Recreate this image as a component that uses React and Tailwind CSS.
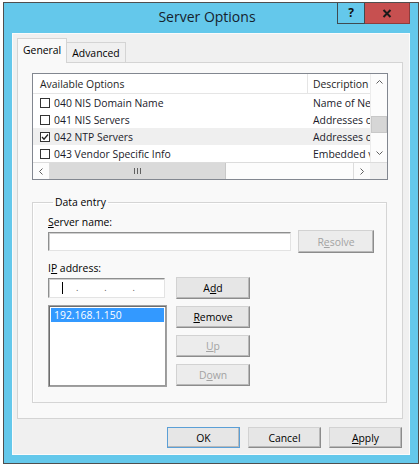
import React from 'react';

// Windows 8 style "Server Options" DHCP dialog

const options = [
  { code: '040 NIS Domain Name', desc: 'Name of Network', checked: false },
  { code: '041 NIS Servers', desc: 'Addresses of', checked: false },
  { code: '042 NTP Servers', desc: 'Addresses of', checked: true, hover: true },
  { code: '043 Vendor Specific Info', desc: 'Embedded ven', checked: false },
];

function Chevron({ dir }) {
  const paths = {
    up: 'M1.5 5.5 L4.5 2.5 L7.5 5.5',
    down: 'M1.5 2.5 L4.5 5.5 L7.5 2.5',
    left: 'M5.5 1.5 L2.5 4.5 L5.5 7.5',
    right: 'M2.5 1.5 L5.5 4.5 L2.5 7.5',
  };
  return (
    <svg width="9" height="9" viewBox="0 0 9 9">
      <path d={paths[dir]} fill="none" stroke="#606060" strokeWidth="1" />
    </svg>
  );
}

function Btn({ children, w = 'w-[74px]', h = 'h-[22px]', disabled = false, isDefault = false }) {
  return (
    <div
      className={`${w} ${h} flex items-center justify-center border bg-[#e6e6e6] shadow-[inset_-1px_-1px_0_#b9b9b9] ${
        isDefault
          ? 'border-[#5b9fd6]'
          : 'border-t-[#d2d2d2] border-l-[#d2d2d2] border-r-[#8c8c8c] border-b-[#8c8c8c]'
      } ${disabled ? 'text-[#a3a3a3] bg-[#ececec]' : 'text-black'}`}
    >
      {children}
    </div>
  );
}

export default function App() {
  return (
    <div className="w-[420px] h-[467px] bg-white pl-[3px] pt-[2px] [font-family:'Segoe_UI','Open_Sans',sans-serif] text-[10.4px] leading-[14px] text-black">
      <div className="w-[416px] h-[462px] border border-[#4f4f4f] bg-[#64c8eb] flex flex-col">
        {/* Title bar */}
        <div className="h-[30px] grid grid-cols-[1fr_auto_1fr] pr-[8px]">
          <div />
          <div className="self-center pb-[2px] text-[14px] leading-[18px] text-[#16222d]">Server Options</div>
          <div className="flex justify-end items-start">
            <div className="w-[28px] h-[21px] border border-t-0 border-[#3f4a50] flex items-center justify-center text-[12px] font-bold text-[#111]">
              ?
            </div>
            <div className="w-[45px] h-[21px] border border-t-0 border-l-0 border-[#8e3c3c] bg-[#c75050] flex items-center justify-center">
              <svg width="10" height="9" viewBox="0 0 10 9">
                <path d="M1.5 1 L8.5 8 M8.5 1 L1.5 8" stroke="#1a1a1a" strokeWidth="2" />
              </svg>
            </div>
          </div>
        </div>

        {/* Body */}
        <div className="mx-[8px] h-[422px] bg-[#f0f0f0] border border-[#fbfbfb] p-[4px]">
          {/* Tabs */}
          <div className="flex items-end h-[24px]">
            <div className="relative z-10 h-[25px] mb-[-1px] px-[5px] pt-[4px] border border-b-0 border-[#d4d4d4] bg-[#f9f9f9]">
              General
            </div>
            <div className="h-[20px] px-[5px] pt-[3px] border border-l-0 border-b-0 border-[#d4d4d4] bg-[#f0f0f0]">
              Advanced
            </div>
          </div>

          {/* Tab page */}
          <div className="w-[386px] h-[357px] border border-[#d4d4d4] bg-[#f9f9f9] pl-[14px] pt-[10px]">
            {/* List view */}
            <div className="w-[356px] h-[107px] border border-[#828790] bg-white flex flex-col">
              <div className="flex h-[88px]">
                <div className="w-[337px] flex flex-col">
                  <div className="h-[20px] flex border-b border-[#e5e5e5] text-[#1e1e1e]">
                    <div className="w-[275px] pl-[7px] flex items-center border-r border-[#e5e5e5]">Available Options</div>
                    <div className="flex-1 pl-[5px] flex items-center overflow-hidden whitespace-nowrap">Description</div>
                  </div>
                  {options.map((o) => (
                    <div key={o.code} className={`h-[17px] flex ${o.hover ? 'bg-[#efefef]' : ''}`}>
                      <div className="w-[275px] pl-[7px] flex items-center gap-[4px]">
                        <div className="w-[10px] h-[10px] border border-[#333] bg-white flex items-center justify-center">
                          {o.checked && (
                            <svg width="8" height="8" viewBox="0 0 8 8">
                              <path d="M1 4 L3 6.2 L7 1.5" fill="none" stroke="#222" strokeWidth="1.3" />
                            </svg>
                          )}
                        </div>
                        <span className="text-[#1a1a2a]">{o.code}</span>
                      </div>
                      <div className="w-[62px] pl-[5px] flex items-center overflow-hidden whitespace-nowrap text-[#1a1a2a]">
                        {o.desc}
                      </div>
                    </div>
                  ))}
                </div>
                {/* vertical scrollbar */}
                <div className="w-[17px] flex flex-col bg-[#fcfcfc] border-l border-[#ececec]">
                  <div className="h-[17px] flex items-center justify-center"><Chevron dir="up" /></div>
                  <div className="mt-[25px] h-[17px] bg-[#d6d6d6] border border-[#c8c8c8]" />
                  <div className="flex-1" />
                  <div className="h-[17px] flex items-center justify-center"><Chevron dir="down" /></div>
                </div>
              </div>
              {/* horizontal scrollbar */}
              <div className="flex h-[17px] border-t border-[#dcdcdc]">
                <div className="w-[337px] flex bg-[#fcfcfc]">
                  <div className="w-[17px] flex items-center justify-center border-r border-[#dcdcdc]"><Chevron dir="left" /></div>
                  <div className="w-[176px] bg-[#dadada] border-r border-[#c8c8c8] flex items-center justify-center gap-[2px]">
                    <div className="w-px h-[6px] bg-[#606060]" />
                    <div className="w-px h-[6px] bg-[#606060]" />
                    <div className="w-px h-[6px] bg-[#606060]" />
                  </div>
                  <div className="flex-1" />
                  <div className="w-[17px] flex items-center justify-center border-l border-[#dcdcdc]"><Chevron dir="right" /></div>
                </div>
                <div className="flex-1 bg-[#f0f0f0]" />
              </div>
            </div>

            {/* Data entry group */}
            <fieldset className="mt-[15px] w-[355px] border border-[#d5d5d5] shadow-[inset_1px_1px_0_#ffffff] pl-[15px] pb-[15px]">
              <legend className="ml-[5px] px-[2px]">Data entry</legend>
              <div className="mt-[6px]">
                <u className="underline-offset-[1px]">S</u>erver name:
              </div>
              <div className="mt-[1px] flex items-center gap-[7px]">
                <div className="w-[243px] h-[19px] bg-white border border-t-[#8e8f8f] border-l-[#8e8f8f] border-r-[#e3e3e3] border-b-[#e3e3e3] shadow-[inset_1px_1px_0_#cfcfcf]" />
                <Btn w="w-[76px]" h="h-[23px]" disabled>
                  <span>R<u className="underline-offset-[1px]">e</u>solve</span>
                </Btn>
              </div>
              <div className="mt-[8px]">
                I<u className="underline-offset-[1px]">P</u> address:
              </div>
              <div className="mt-[2px] flex">
                <div className="w-[119px] flex flex-col">
                  <div className="mt-[1px] w-[117px] h-[20px] bg-white border border-t-[#8e8f8f] border-l-[#8e8f8f] border-r-[#e3e3e3] border-b-[#e3e3e3] shadow-[inset_1px_1px_0_#cfcfcf] grid grid-cols-4 items-center px-[1px]">
                    <div className="flex items-center justify-between h-full">
                      <div />
                      <div className="w-px h-[12px] bg-black" />
                      <div className="text-[#555] text-[9px]">.</div>
                    </div>
                    <div className="flex justify-end text-[#555] text-[9px]">.</div>
                    <div className="flex justify-end text-[#555] text-[9px]">.</div>
                    <div />
                  </div>
                  <div className="mt-[7px] w-[119px] h-[82px] bg-white border border-[#a0a0a0] shadow-[inset_1px_1px_0_#6d6d6d,inset_-1px_-1px_0_#9a9a9a] p-[2px]">
                    <div className="h-[14px] bg-[#3399ff] text-white pl-[3px] flex items-center">192.168.1.150</div>
                  </div>
                </div>
                <div className="ml-[9px] flex flex-col gap-[7px]">
                  <Btn>
                    <span>A<u className="underline-offset-[1px]">d</u>d</span>
                  </Btn>
                  <Btn>
                    <span><u className="underline-offset-[1px]">R</u>emove</span>
                  </Btn>
                  <Btn disabled>
                    <span><u className="underline-offset-[1px]">U</u>p</span>
                  </Btn>
                  <Btn disabled>
                    <span>D<u className="underline-offset-[1px]">o</u>wn</span>
                  </Btn>
                </div>
              </div>
            </fieldset>
          </div>

          {/* Dialog buttons */}
          <div className="mt-[8px] pr-[3px] flex justify-end gap-[8px]">
            <Btn w="w-[73px]" h="h-[21px]" isDefault>OK</Btn>
            <Btn w="w-[73px]" h="h-[21px]">Cancel</Btn>
            <Btn w="w-[73px]" h="h-[21px]">
              <span><u className="underline-offset-[1px]">A</u>pply</span>
            </Btn>
          </div>
        </div>
      </div>
    </div>
  );
}
